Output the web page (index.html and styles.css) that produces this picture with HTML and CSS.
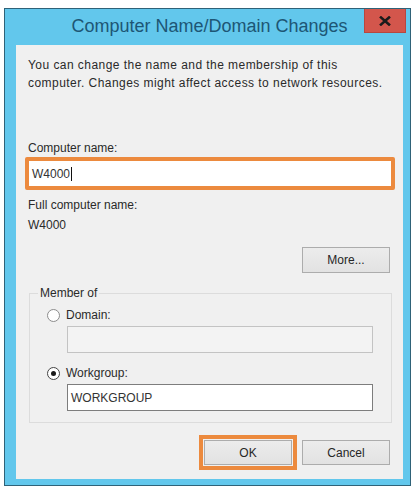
FILE: index.html
```html
<!DOCTYPE html>
<html lang="en">
<head>
<meta charset="utf-8">
<title>Computer Name/Domain Changes</title>
<link rel="stylesheet" href="styles.css">
</head>
<body>
<div class="window">
  <div class="titlebar">
    <div class="tb-side"></div>
    <div class="title">Computer Name/Domain Changes</div>
    <div class="tb-side tb-right">
      <div class="close">
        <svg width="12" height="10" viewBox="0 0 12 10"><path d="M2 1.5 L10 8.5 M10 1.5 L2 8.5" stroke="#1b1b1b" stroke-width="2.6" stroke-linecap="square" fill="none"/></svg>
      </div>
    </div>
  </div>
  <div class="client">
    <p class="intro">You can change the name and the membership of this<br>computer. Changes might affect access to network resources.</p>
    <div class="label gap-large">Computer name:</div>
    <div class="name-field"><span>W4000</span><span class="caret"></span></div>
    <div class="label gap-small">Full computer name:</div>
    <div class="label gap-tiny">W4000</div>
    <div class="more-row"><button class="btn">More...</button></div>
    <fieldset class="group">
      <legend>Member of</legend>
      <div class="radio-row first"><span class="radio"></span><span>Domain:</span></div>
      <div class="field disabled"></div>
      <div class="radio-row"><span class="radio checked"></span><span>Workgroup:</span></div>
      <div class="field">WORKGROUP</div>
    </fieldset>
    <div class="buttons">
      <button class="btn ok">OK</button>
      <button class="btn">Cancel</button>
    </div>
  </div>
</div>
</body>
</html>
```
FILE: styles.css
```css
* { box-sizing: border-box; }
html, body { margin: 0; padding: 0; background: #ffffff; }
body {
  font-family: "Liberation Sans", Arial, sans-serif;
  font-size: 12px;
  color: #2a2a2a;
}
.window {
  margin: 8px 4px 0 4px;
  width: 407px;
  border: 1px solid #2f6278;
  background: #62c7ec;
  padding: 0 7px 6px 11px;
}
.titlebar {
  height: 36px;
  display: grid;
  grid-template-columns: 1fr auto 1fr;
  align-items: start;
}
.title {
  padding-top: 5px;
  line-height: 24px;
  font-size: 18px;
  color: #1d5675;
  white-space: nowrap;
}
.tb-right { display: flex; justify-content: flex-end; }
.close {
  width: 42px;
  height: 24px;
  margin-right: -3px;
  background: #d3564c;
  border: 1px solid #b8473f;
  border-top: none;
  display: flex;
  align-items: center;
  justify-content: center;
}
.client {
  background: #f0f0f0;
  padding: 11px 13px 14px 12px;
}
.intro {
  margin: 0;
  line-height: 18px;
  letter-spacing: 0.45px;
  white-space: nowrap;
}
.label { line-height: 18px; }
.gap-large { margin-top: 47px; }
.gap-small { margin-top: 6px; }
.gap-tiny { margin-top: 2px; }
.name-field {
  height: 33px;
  margin: 0 -5px 0 -3px;
  border: 4px solid #ec8a3e;
  border-radius: 2px;
  background: #ffffff;
  padding-left: 3px;
  display: flex;
  align-items: center;
  color: #333;
}
.caret {
  display: inline-block;
  width: 1px;
  height: 14px;
  margin-left: 1px;
  background: #111;
}
.more-row {
  margin-top: 13px;
  display: flex;
  justify-content: flex-end;
}
.btn {
  width: 88px;
  height: 26px;
  padding: 0;
  font-family: inherit;
  font-size: 12px;
  color: #262626;
  background: linear-gradient(#ececec, #e2e2e2);
  border: 1px solid #acacac;
  border-radius: 0;
}
.group {
  margin: 11px -2px 0 1px;
  padding: 0 0 11px 0;
  border: 1px solid #dcdcdc;
  min-width: 0;
}
.group legend {
  margin-left: 8px;
  padding: 0 2px;
  line-height: 18px;
}
.radio-row {
  margin-top: 11px;
  padding-left: 17px;
  display: flex;
  align-items: center;
  gap: 6px;
  line-height: 18px;
}
.radio-row.first { margin-top: 4px; }
.radio {
  width: 13px;
  height: 13px;
  border-radius: 50%;
  border: 1px solid #8c8c8c;
  background: #ffffff;
  display: flex;
  align-items: center;
  justify-content: center;
}
.radio.checked { border-color: #444; }
.radio.checked::after {
  content: "";
  width: 5px;
  height: 5px;
  border-radius: 50%;
  background: #1a1a1a;
}
.field {
  margin: 2px 18px 0 37px;
  height: 27px;
  border: 1px solid #7d7d7d;
  background: #ffffff;
  padding-left: 3px;
  display: flex;
  align-items: center;
  color: #333;
}
.field.disabled {
  background: #f3f3f3;
  border-color: #c3c3c3;
}
.buttons {
  margin-top: 17px;
  display: flex;
  justify-content: flex-end;
  gap: 10px;
}
.buttons .btn { height: 25px; }
.btn.ok {
  outline: 4px solid #ec8a3e;
  outline-offset: 1px;
}
```
